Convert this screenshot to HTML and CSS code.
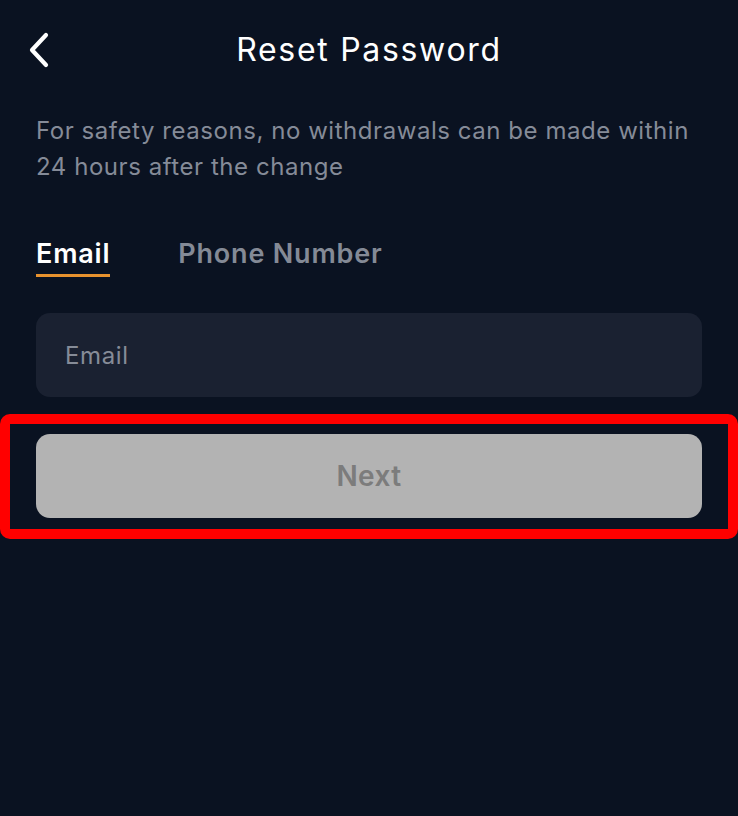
FILE: index.html
```html
<!DOCTYPE html>
<html lang="en">
<head>
<meta charset="utf-8">
<title>Reset Password</title>
<link rel="stylesheet" href="styles.css">
</head>
<body>
<div class="screen">
  <header class="topbar">
    <button class="back" aria-label="Back">
      <svg width="24" height="36" viewBox="0 0 24 36"><path d="M19 3 L5 18 L19 33" fill="none" stroke="#fff" stroke-width="4.2" stroke-linecap="round" stroke-linejoin="round"/></svg>
    </button>
    <h1 class="title">Reset Password</h1>
  </header>
  <p class="notice">For safety reasons, no withdrawals can be made within 24 hours after the change</p>
  <nav class="tabs">
    <span class="tab active">Email</span>
    <span class="tab">Phone Number</span>
  </nav>
  <div class="field"><span class="placeholder">Email</span></div>
  <div class="btn-wrap">
    <button class="next">Next</button>
    <div class="highlight"></div>
  </div>
</div>
</body>
</html>
```
FILE: styles.css
```css
* { box-sizing: border-box; }
html, body { margin: 0; padding: 0; }
body {
  background: #0a1221;
  font-family: Inter, "Noto Sans", sans-serif;
  width: 738px;
  height: 816px;
  overflow: hidden;
}
.screen {
  padding: 0 36px;
  display: flex;
  flex-direction: column;
}
.topbar {
  position: relative;
  height: 100px;
  display: flex;
  align-items: center;
  justify-content: center;
}
.back {
  position: absolute;
  left: -9px;
  top: 32px;
  background: none;
  border: 0;
  padding: 0;
  width: 24px;
  height: 36px;
  display: flex;
}
.title {
  margin: 0;
  color: #fff;
  font-size: 32px;
  font-weight: 400;
  letter-spacing: 1.7px;
  line-height: 1;
}
.notice {
  margin: 13px 0 0;
  color: #858b98;
  font-size: 24px;
  letter-spacing: 0.55px;
  line-height: 36px;
}
.tabs {
  display: flex;
  gap: 68px;
  margin-top: 51px;
}
.tab {
  font-size: 27px;
  font-weight: 600;
  letter-spacing: 0.8px;
  color: #848a96;
  line-height: 36px;
  padding-bottom: 2px;
}
.tab.active {
  color: #fff;
  border-bottom: 3px solid #e8922e;
}
.field {
  margin-top: 36px;
  height: 84px;
  background: #1a2131;
  border-radius: 14px;
  display: flex;
  align-items: center;
  padding-left: 29px;
}
.placeholder {
  color: #868c98;
  font-size: 24px;
  letter-spacing: 0.6px;
}
.btn-wrap {
  position: relative;
  margin-top: 37px;
}
.next {
  width: 100%;
  height: 84px;
  background: #b3b3b3;
  border: 0;
  border-radius: 14px;
  color: #7c7c7c;
  font-family: Inter, "Noto Sans", sans-serif;
  font-size: 28px;
  font-weight: 600;
  letter-spacing: 0.4px;
}
.highlight {
  position: absolute;
  left: -36px;
  right: -36px;
  top: -20px;
  bottom: -21px;
  border: 10px solid #ff0000;
  border-radius: 10px;
}
```
